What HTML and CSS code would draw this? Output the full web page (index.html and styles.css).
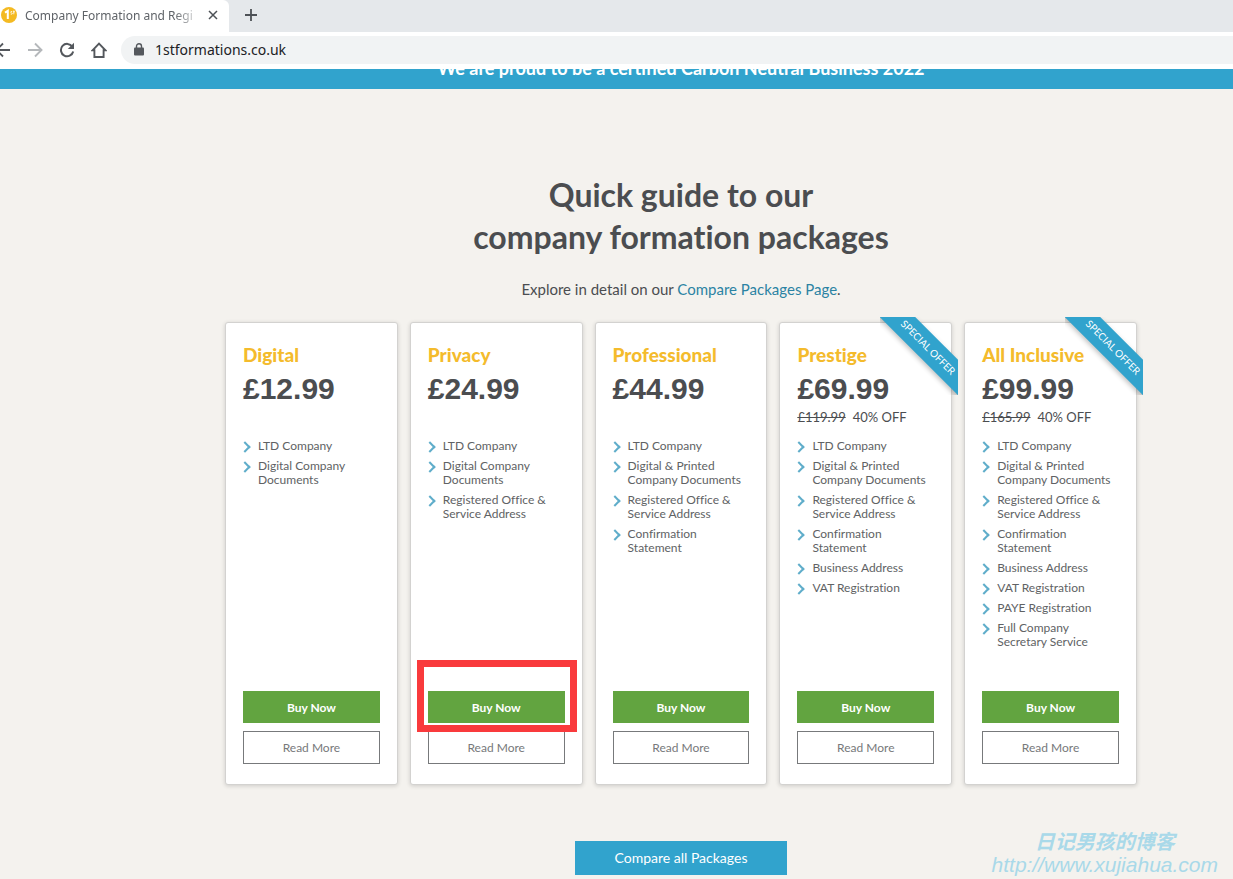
FILE: index.html
```html
<!DOCTYPE html>
<html lang="en">
<head>
<meta charset="utf-8">
<meta name="viewport" content="width=device-width, initial-scale=1">
<title>Company Formation and Registration</title>
<link rel="stylesheet" href="styles.css">
</head>
<body>
<header class="browser">
  <div class="tabs">
    <div class="tab">
      <svg class="favicon" viewBox="0 0 16 16" aria-hidden="true"><circle cx="8" cy="8" r="8" fill="#f4ba22"/><path d="M4 5.600 6.800 3.800V12" fill="none" stroke="#fff" stroke-width="2"/><path d="M11.200 4.500c-2-.5-2 1.200-.7 1.400 1.400.3 1.200 1.800-.8 1.200M12.800 3.500v3.800M12 4.800h2" fill="none" stroke="#fff" stroke-width=".8"/></svg>
      <span class="tab-title">Company Formation and Regi</span>
      <button class="icon-btn" aria-label="Close tab"><svg width="10" height="10" viewBox="0 0 10 10"><path d="M1 1 9 9M9 1 1 9" stroke="#4d5156" stroke-width="1.500"/></svg></button>
    </div>
    <button class="icon-btn new-tab" aria-label="New tab"><svg width="14" height="14" viewBox="0 0 14 14"><path d="M7 1V13M1 7H13" stroke="#4d5156" stroke-width="1.800"/></svg></button>
  </div>
  <div class="toolbar">
    <button class="icon-btn back" aria-label="Back"><svg width="16" height="16" viewBox="0 0 16 16"><path d="M15 8H2M8 1.500 1.500 8 8 14.500" fill="none" stroke="#54585d" stroke-width="1.900"/></svg></button>
    <button class="icon-btn" aria-label="Forward"><svg width="16" height="16" viewBox="0 0 16 16"><path d="M1 8H14M8 1.500 14.500 8 8 14.500" fill="none" stroke="#b5b8bb" stroke-width="1.900"/></svg></button>
    <button class="icon-btn" aria-label="Reload"><svg width="16" height="16" viewBox="0 0 16 16"><path d="M13.300 4.600A6.200 6.200 0 1 0 14.200 9.500" fill="none" stroke="#54585d" stroke-width="2"/><path d="M15 .8V7H8.800Z" fill="#54585d"/></svg></button>
    <button class="icon-btn" aria-label="Home"><svg width="16" height="16" viewBox="0 0 16 16"><path d="M1.500 8.300 8 1.600 14.500 8.300H12.600V15H3.400V8.300Z" fill="none" stroke="#54585d" stroke-width="1.900"/></svg></button>
    <label class="address">
      <svg width="10" height="13" viewBox="0 0 10 13" aria-hidden="true"><rect y="4.500" width="10" height="8" rx="1" fill="#54585d"/><path d="M2.500 5V3.200a2.500 2.500 0 0 1 5 0V5" fill="none" stroke="#54585d" stroke-width="1.400"/></svg>
      <input class="address-input" type="text" value="1stformations.co.uk" aria-label="Address">
    </label>
  </div>
</header>

<div class="banner"><p class="banner-text">We are proud to be a certified Carbon Neutral Business 2022</p></div>

<main class="page">
  <h1 class="title">Quick guide to our<br>company formation packages</h1>
  <p class="intro">Explore in detail on our <a class="link" href="#compare">Compare Packages Page</a>.</p>

  <div class="cards">
    <article class="card">
      <h2 class="name">Digital</h2>
      <p class="price">£12.99</p>
      <p class="saving"></p>
      <ul class="features"><li>LTD Company</li><li>Digital Company<br>Documents</li></ul>
      <div class="actions"><button class="buy">Buy Now</button><button class="more">Read More</button></div>
    </article>
    <article class="card">
      <h2 class="name">Privacy</h2>
      <p class="price">£24.99</p>
      <p class="saving"></p>
      <ul class="features"><li>LTD Company</li><li>Digital Company<br>Documents</li><li>Registered Office &amp;<br>Service Address</li></ul>
      <div class="actions"><button class="buy">Buy Now</button><button class="more">Read More</button><span class="highlight"></span></div>
    </article>
    <article class="card">
      <h2 class="name">Professional</h2>
      <p class="price">£44.99</p>
      <p class="saving"></p>
      <ul class="features"><li>LTD Company</li><li>Digital &amp; Printed<br>Company Documents</li><li>Registered Office &amp;<br>Service Address</li><li>Confirmation<br>Statement</li></ul>
      <div class="actions"><button class="buy">Buy Now</button><button class="more">Read More</button></div>
    </article>
    <article class="card">
      <div class="ribbon"><span class="ribbon-band">SPECIAL OFFER</span></div>
      <h2 class="name">Prestige</h2>
      <p class="price">£69.99</p>
      <p class="saving"><s>£119.99</s><span>40% OFF</span></p>
      <ul class="features"><li>LTD Company</li><li>Digital &amp; Printed<br>Company Documents</li><li>Registered Office &amp;<br>Service Address</li><li>Confirmation<br>Statement</li><li>Business Address</li><li>VAT Registration</li></ul>
      <div class="actions"><button class="buy">Buy Now</button><button class="more">Read More</button></div>
    </article>
    <article class="card">
      <div class="ribbon"><span class="ribbon-band">SPECIAL OFFER</span></div>
      <h2 class="name">All Inclusive</h2>
      <p class="price">£99.99</p>
      <p class="saving"><s>£165.99</s><span>40% OFF</span></p>
      <ul class="features"><li>LTD Company</li><li>Digital &amp; Printed<br>Company Documents</li><li>Registered Office &amp;<br>Service Address</li><li>Confirmation<br>Statement</li><li>Business Address</li><li>VAT Registration</li><li>PAYE Registration</li><li>Full Company<br>Secretary Service</li></ul>
      <div class="actions"><button class="buy">Buy Now</button><button class="more">Read More</button></div>
    </article>
  </div>

  <a class="compare" id="compare" href="#compare">Compare all Packages</a>
</main>

<aside class="watermark"><span class="watermark-name">日记男孩的博客</span><span>http://www.xujiahua.com</span></aside>
</body>
</html>
```
FILE: styles.css
```css
* { box-sizing: border-box; }

body {
  margin: 0;
  position: relative;
  min-height: 100vh;
  background: #f4f2ee;
  color: #4b4d50;
  font-family: Lato, "Open Sans", sans-serif;
  font-variant-ligatures: none;
}

h1, h2, p, ul { margin: 0; padding: 0; }
button { font: inherit; cursor: pointer; }

.browser { background: #fff; font-family: "Noto Sans", sans-serif; }

.tabs {
  display: flex;
  align-items: center;
  height: 32px;
  background: #e5e8eb;
}

.tab {
  display: flex;
  align-items: center;
  width: 229px;
  height: 32px;
  padding: 0 11px 2px 1px;
  background: #fff;
  border-radius: 0 6px 0 0;
}

.favicon { flex: none; width: 16px; height: 16px; }

.tab-title {
  flex: 1;
  margin: 0 6px 0 8px;
  white-space: nowrap;
  font-size: 12px;
  color: #5f6368;
  mask-image: linear-gradient(to right, #000 84%, transparent);
}

.icon-btn {
  display: flex;
  flex: none;
  padding: 0;
  border: 0;
  background: none;
}

.new-tab { margin: 0 0 2px 15px; }

.toolbar {
  display: flex;
  align-items: center;
  gap: 16px;
  height: 37px;
  padding-bottom: 2px;
  overflow: hidden;
}

.back { margin-left: -5px; }

.address {
  display: flex;
  flex: 1;
  align-items: center;
  gap: 11px;
  height: 28px;
  margin-left: -2px;
  padding-left: 13px;
  border-radius: 14px 0 0 14px;
  background: #f1f3f4;
}

.address-input {
  flex: 1;
  padding: 0;
  border: 0;
  outline: 0;
  background: none;
  font: 14px "Noto Sans", sans-serif;
  color: #202124;
}

.banner {
  display: flex;
  align-items: flex-end;
  height: 20px;
  padding: 0 96px 9px 225px;
  overflow: hidden;
  background: #31a3cd;
}

.banner-text {
  width: 100%;
  font-size: 18px;
  line-height: 24px;
  font-weight: 700;
  text-align: center;
  color: #fff;
}

.page {
  display: flex;
  flex-direction: column;
  padding: 85px 96px 4px 225px;
}

.title {
  font-size: 32px;
  line-height: 42px;
  font-weight: 700;
  text-align: center;
}

.intro {
  margin-top: 19px;
  font-size: 15px;
  line-height: 24px;
  text-align: center;
}

.link { color: #2b83a3; text-decoration: none; }

.cards {
  display: grid;
  grid-template-columns: repeat(5, 1fr);
  gap: 12px;
  margin-top: 21px;
}

.card {
  position: relative;
  display: flex;
  flex-direction: column;
  min-height: 463px;
  padding: 20px 17px;
  border: 1px solid #d3d2d0;
  border-radius: 3px;
  background: #fff;
  box-shadow: 0 1px 4px rgba(0, 0, 0, .16);
}

.name {
  font-size: 19px;
  line-height: 24px;
  font-weight: 900;
  color: #f4bb2c;
}

.price {
  margin-top: 2px;
  font: 700 30px/40px "Liberation Sans", Arial, sans-serif;
}

.saving {
  display: flex;
  gap: 7px;
  min-height: 16px;
  font-size: 13px;
  line-height: 16px;
  white-space: nowrap;
}

.features {
  display: flex;
  flex-direction: column;
  gap: 6px;
  margin-top: 14px;
  list-style: none;
  font-size: 12px;
  line-height: 14px;
  color: #606264;
  white-space: nowrap;
}

.features li { display: flow-root; padding-left: 15px; }

.features li::before {
  content: "";
  float: left;
  width: 6px;
  height: 6px;
  margin: 4px 0 0 -17px;
  border: solid #5fadca;
  border-width: 2px 2px 0 0;
  transform: rotate(45deg);
}

.actions {
  position: relative;
  display: flex;
  flex-direction: column;
  gap: 8px;
  margin-top: auto;
}

.buy, .more { height: 32px; padding: 0; }

.buy {
  border: 0;
  background: #62a440;
  color: #fff;
  font-size: 12px;
  font-weight: 700;
}

.more {
  height: 33px;
  border: 1px solid #77797b;
  background: #fff;
  color: #77797b;
  font-size: 12px;
}

.highlight {
  position: absolute;
  top: -31px;
  left: -11px;
  right: -12px;
  height: 72px;
  border: 7px solid #f93a3c;
  pointer-events: none;
}

.ribbon {
  position: absolute;
  top: -6px;
  right: -7px;
  width: 78px;
  height: 78px;
  overflow: hidden;
}

.ribbon-band {
  position: absolute;
  top: 18px;
  left: -12px;
  width: 120px;
  background: #31a3cd;
  box-shadow: 0 2px 5px rgba(0, 0, 0, .25);
  color: #fff;
  font-size: 10px;
  line-height: 25px;
  text-align: center;
  transform: rotate(45deg);
}

.compare {
  align-self: center;
  margin-top: 56px;
  padding: 0 40px;
  background: #31a3cd;
  color: #fff;
  font-size: 14px;
  line-height: 34px;
  text-decoration: none;
}

.watermark {
  position: absolute;
  right: 15px;
  bottom: 2px;
  display: flex;
  flex-direction: column;
  align-items: center;
  font: italic 21px/24px "Liberation Sans", Arial, sans-serif;
  color: #a9d9e9;
}

.watermark-name {
  font: italic 700 20px/24px "Noto Sans CJK SC", sans-serif;
}
```
